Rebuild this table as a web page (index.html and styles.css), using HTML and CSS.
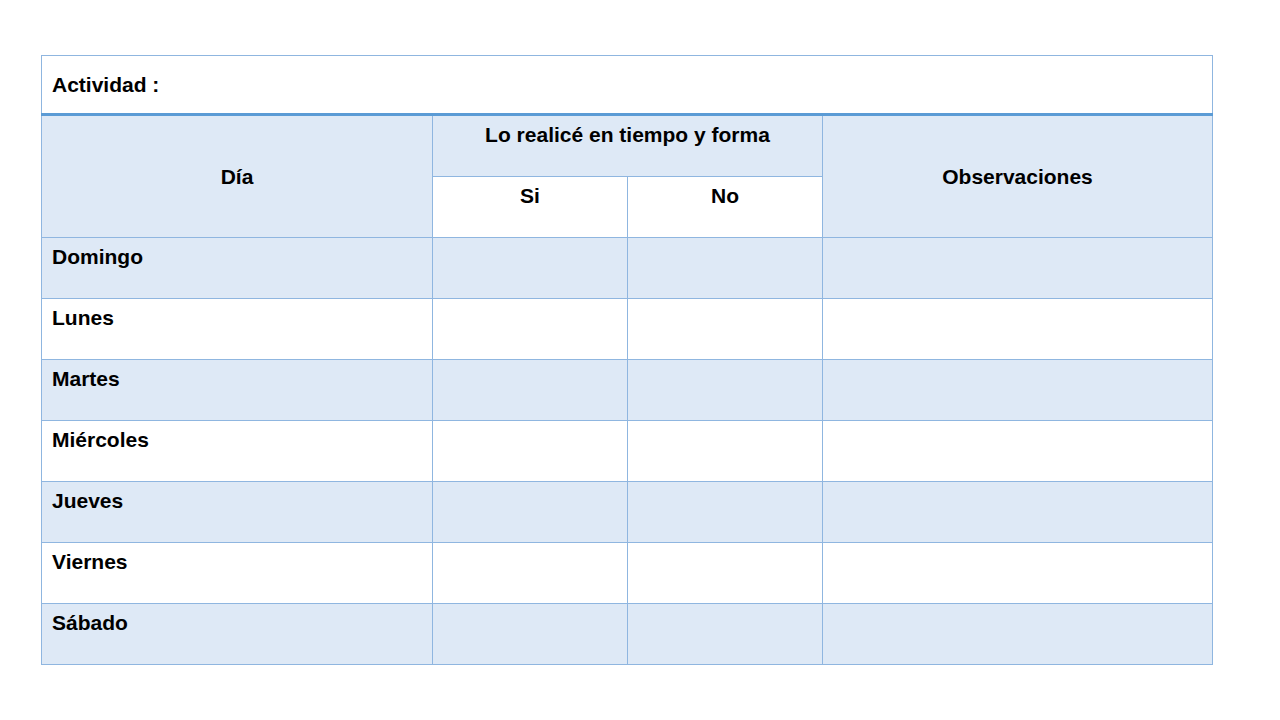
FILE: index.html
```html
<!DOCTYPE html>
<html lang="es">
<head>
  <meta charset="UTF-8" />
  <title>Registro de actividad</title>
  <link rel="stylesheet" href="styles.css">
</head>
<body>
  <table class="sheet">
    <colgroup>
      <col class="col-day">
      <col class="col-check">
      <col class="col-check">
      <col class="col-notes">
    </colgroup>
    <tr class="activity">
      <td colspan="4">Actividad :</td>
    </tr>
    <tr class="head">
      <th rowspan="2" class="mid">Día</th>
      <th colspan="2">Lo realicé en tiempo y forma</th>
      <th rowspan="2" class="mid">Observaciones</th>
    </tr>
    <tr class="head sub">
      <th>Si</th>
      <th>No</th>
    </tr>
    <tr class="band"><td>Domingo</td><td></td><td></td><td></td></tr>
    <tr><td>Lunes</td><td></td><td></td><td></td></tr>
    <tr class="band"><td>Martes</td><td></td><td></td><td></td></tr>
    <tr><td>Miércoles</td><td></td><td></td><td></td></tr>
    <tr class="band"><td>Jueves</td><td></td><td></td><td></td></tr>
    <tr><td>Viernes</td><td></td><td></td><td></td></tr>
    <tr class="band"><td>Sábado</td><td></td><td></td><td></td></tr>
  </table>
</body>
</html>
```

FILE: styles.css
```css
html, body {
  margin: 0;
  background: #fff;
  color: #000;
  font-family: "Liberation Sans", Arial, sans-serif;
}

.sheet {
  margin: 55px 0 0 41px;
  width: 1171px;
  table-layout: fixed;
  border-collapse: collapse;
  font-size: 21px;
  font-weight: 700;
}

.col-day { width: 391px; }
.col-check { width: 195px; }
.col-notes { width: 390px; }

.sheet td, .sheet th {
  border: 1px solid #8fb6e0;
  padding: 7px 10px 0;
  vertical-align: top;
  text-align: left;
  font-weight: 700;
  height: 53px;
}

.sheet th {
  text-align: center;
  background: #dee9f6;
}

.sheet th.mid {
  vertical-align: middle;
  padding-top: 0;
}

.sheet .sub th {
  background: #fff;
}

.activity td {
  border-bottom: 3px solid #5b9bd5;
  vertical-align: middle;
  padding-top: 0;
  height: 57px;
}

.band td {
  background: #dee9f6;
}
```
